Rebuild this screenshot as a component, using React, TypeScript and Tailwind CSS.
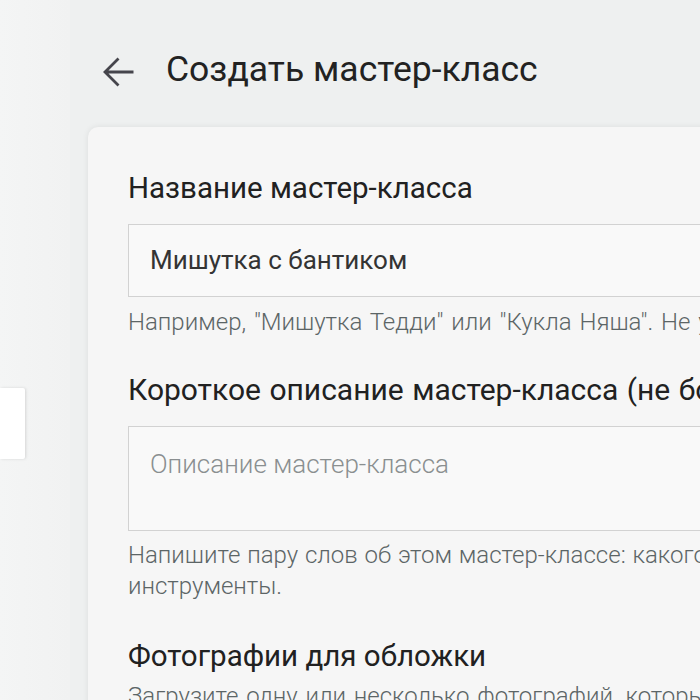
function BackArrow() {
  return (
    <svg viewBox="0 0 32 32" className="w-[32px] h-[32px] shrink-0" fill="none">
      <path d="M30.5 16H2.5M15.5 2.5L2 16l13.5 13.5" stroke="#45454c" strokeWidth="2.8" />
    </svg>
  );
}

export default function App() {
  return (
    <div className="w-[700px] h-[700px] overflow-hidden bg-[#eef0f0] flex font-['Roboto',sans-serif]">
      {/* боковая полоса */}
      <div className="w-[70px] shrink-0 bg-gradient-to-r from-[#f4f5f5] to-[#f1f2f2] flex flex-col pt-[388px]">
        <div className="w-[25px] h-[71px] bg-white shadow-[1px_0_3px_rgba(0,0,0,0.12)] rounded-r-[2px]" />
      </div>

      <div className="flex-1 pl-[18px] min-w-0">
        {/* заголовок */}
        <div className="h-[127px] flex items-start pt-[52px]">
          <div className="ml-[15px] mt-[4px]">
            <BackArrow />
          </div>
          <h1 className="ml-[31px] text-[35.5px] leading-none text-[#222] whitespace-nowrap">
            Создать мастер-класс
          </h1>
        </div>

        {/* карточка */}
        <div className="w-[700px] h-[620px] bg-[#f6f6f6] rounded-tl-[10px] shadow-[0_0_6px_rgba(0,0,0,0.08)] pl-[40px] pt-[43px]">
          <div className="text-[29.5px] leading-[36px] text-[#212121] whitespace-nowrap">
            Название мастер-класса
          </div>
          <div className="mt-[18px] h-[73px] border border-[#d2d2d2] bg-[#f9f9f9] flex items-center pl-[21px] text-[26px] text-[#343434] whitespace-nowrap">
            Мишутка с бантиком
          </div>
          <div className="mt-[10px] text-[24px] leading-[31px] font-light text-[#5c6566] whitespace-nowrap [word-spacing:2px]">
            Например, "Мишутка Тедди" или "Кукла Няша". Не указывайте
          </div>

          <div className="mt-[34px] text-[30px] leading-[36px] text-[#212121] whitespace-nowrap [word-spacing:1px]">
            Короткое описание мастер-класса (не более 300 символов)
          </div>
          <div className="mt-[18px] h-[105px] border border-[#d2d2d2] bg-[#f9f9f9] pl-[21px] pt-[22px] text-[26px] leading-[30px] font-light text-[#8a8f90] whitespace-nowrap">
            Описание мастер-класса
          </div>
          <div className="mt-[9px] text-[24px] leading-[31px] font-light text-[#5c6566] whitespace-nowrap [word-spacing:1px]">
            Напишите пару слов об этом мастер-классе: какого размера,
            <br />
            инструменты.
          </div>

          <div className="mt-[36px] text-[29.5px] leading-[36px] text-[#212121] whitespace-nowrap">
            Фотографии для обложки
          </div>
          <div className="mt-[7px] text-[24px] leading-[31px] font-light text-[#5c6566] whitespace-nowrap [word-spacing:2px]">
            Загрузите одну или несколько фотографий, которые
          </div>
        </div>
      </div>
    </div>
  );
}
